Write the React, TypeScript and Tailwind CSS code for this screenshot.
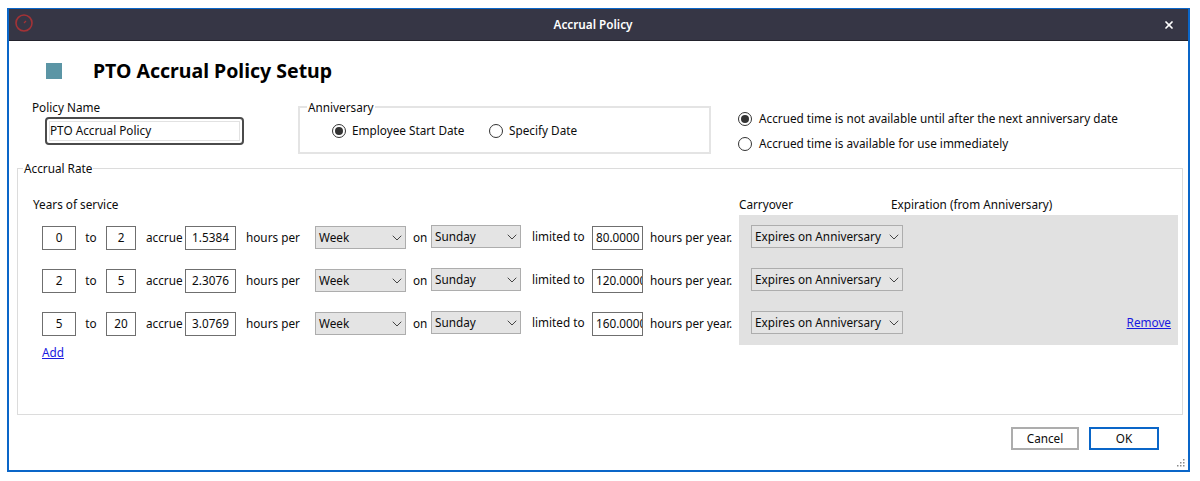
import { ChevronDown, X } from "lucide-react";

const rows = [
  { from: "0", to: "2", rate: "1.5384", limit: "80.0000" },
  { from: "2", to: "5", rate: "2.3076", limit: "120.0000" },
  { from: "5", to: "20", rate: "3.0769", limit: "160.0000" },
];

const Box = ({ value, width }: { value: string; width: string }) => (
  <div className={`${width} h-[24px] shrink-0 overflow-hidden whitespace-nowrap border border-[#6f6f6f] bg-white px-[3px] text-center leading-[21px]`}>
    {value}
  </div>
);

const Select = ({ value, width, className = "" }: { value: string; width: string; className?: string }) => (
  <div className={`${width} ${className} flex h-[23px] shrink-0 items-center justify-between border border-[#adadad] bg-[#e4e4e4] pl-[3px]`}>
    <span>{value}</span>
    <ChevronDown className="h-4 w-4 text-[#444]" strokeWidth={1.5} />
  </div>
);

const Radio = ({ checked }: { checked?: boolean }) => (
  <span className="flex h-[14px] w-[14px] shrink-0 items-center justify-center rounded-full border border-[#333] bg-white">
    {checked && <span className="h-2 w-2 rounded-full bg-[#333]" />}
  </span>
);

export default function App() {
  return (
    <div className="h-[481px] w-[1200px] overflow-hidden bg-white pl-[7px] pt-2 font-['Noto_Sans',sans-serif] text-[11.75px] text-[#0c0c0c]">
      <div className="flex h-[464px] w-[1183px] flex-col border-2 border-t border-[#0a66c8]">
        {/* Title bar */}
        <div className="flex h-[32px] shrink-0 items-center justify-between border-b border-[#22222c] bg-[#363645] pl-[6px] pr-[13px]">
          <svg className="-mt-[3px]" width="18" height="18" viewBox="0 0 18 18" fill="none">
            <circle cx="9" cy="9" r="8" stroke="#a33236" strokeWidth="1.6" />
            <path d="M9 9l2-2" stroke="#a33236" strokeWidth="1.2" />
          </svg>
          <span className="mr-[10px] font-semibold text-white">Accrual Policy</span>
          <X className="h-3 w-3 text-white" strokeWidth={3.5} />
        </div>

        <div className="relative flex min-h-0 flex-1 flex-col bg-white">
          {/* Heading */}
          <div className="flex h-[40px] items-center pl-[37px] pt-[20px]">
            <span className="h-4 w-4 bg-[#5b95a5]" />
            <h1 className="ml-[31px] text-[19.5px] font-bold leading-none text-black">PTO Accrual Policy Setup</h1>
          </div>

          <div className="mt-[18px] flex h-[61px] pl-[23px]">
            <div className="w-[266px]">
              <div className="leading-4">Policy Name</div>
              <div className="ml-[13px] mt-[2px] h-[28px] w-[199px] rounded-[4px] border-2 border-[#4b4b4b] p-[2px]">
                <div className="h-full border border-[#e2e2e2] leading-[16px]">PTO Accrual Policy</div>
              </div>
            </div>
            <fieldset className="h-[55px] w-[413px] border-2 border-[#e4e4e4] pl-[7px]">
              <legend className="px-[1px] leading-4">Anniversary</legend>
              <div className="mt-[7px] flex items-center pl-[25px]">
                <Radio checked />
                <span className="ml-[6px] w-[137px]">Employee Start Date</span>
                <Radio />
                <span className="ml-[6px]">Specify Date</span>
              </div>
            </fieldset>
            <div className="ml-[27px] flex flex-col gap-[9px] pt-[12px]">
              <div className="flex h-4 items-center gap-[7px]">
                <Radio checked />
                <span>Accrued time is not available until after the next anniversary date</span>
              </div>
              <div className="flex h-4 items-center gap-[7px]">
                <Radio />
                <span>Accrued time is available for use immediately</span>
              </div>
            </div>
          </div>

          {/* Accrual rate */}
          <fieldset className="ml-[8px] h-[255px] w-[1166px] border border-[#dcdcdc] pl-[15px]">
            <legend className="ml-[-10px] px-[1px] leading-4">Accrual Rate</legend>
            <div className="mt-[19px] flex h-[17px] items-center leading-4">
              <span className="w-[706px]">Years of service</span>
              <span className="w-[152px]">Carryover</span>
              <span>Expiration (from Anniversary)</span>
            </div>
            <div className="mt-[3px] flex">
              <div className="w-[706px] pt-[11px]">
                <div className="flex flex-col gap-[19px]">
                  {rows.map((row) => (
                    <div key={row.from} className="flex h-[24px] items-center pl-[9px]">
                      <Box value={row.from} width="w-[34px]" />
                      <span className="w-[30px] text-center">to</span>
                      <Box value={row.to} width="w-[30px]" />
                      <span className="ml-[10px] w-[39px]">accrue</span>
                      <Box value={row.rate} width="w-[51px]" />
                      <span className="ml-[10px] w-[69px]">hours per</span>
                      <Select value="Week" width="w-[91px]" className="self-start" />
                      <span className="ml-[7px] w-[18px]">on</span>
                      <Select value="Sunday" width="w-[90px]" className="-mt-px self-start" />
                      <span className="ml-[11px] w-[60px] -translate-y-px">limited to</span>
                      <Box value={row.limit} width="w-[51px]" />
                      <span className="ml-[7px] whitespace-nowrap">hours per year.</span>
                    </div>
                  ))}
                </div>
                <a className="ml-[9px] mt-[8px] block leading-4 text-[#1a1ae0] underline">Add</a>
              </div>
              <div className="h-[130px] w-[439px] bg-[#e1e1e1] pl-[12px] pt-[10px]">
                <div className="flex flex-col gap-[20px]">
                  {rows.map((row, i) => (
                    <div key={row.from} className="flex h-[23px] items-center justify-between pr-[7px]">
                      <Select value="Expires on Anniversary" width="w-[152px]" />
                      {i === 2 && <a className="text-[#1a1ae0] underline">Remove</a>}
                    </div>
                  ))}
                </div>
              </div>
            </div>
          </fieldset>

          {/* Footer */}
          <div className="mt-[12px] flex justify-end gap-[10px] pr-[29px]">
            <button className="h-[23px] w-[68px] border-2 border-[#adadad] bg-white">Cancel</button>
            <button className="h-[23px] w-[70px] border-2 border-[#0a66c8] bg-white">OK</button>
          </div>
          <svg className="absolute bottom-[2px] right-[2px]" width="10" height="10" viewBox="0 0 10 10" fill="#8a8a8a">
            <rect x="7" y="1" width="1.5" height="1.5" />
            <rect x="4" y="4" width="1.5" height="1.5" />
            <rect x="7" y="4" width="1.5" height="1.5" />
            <rect x="1" y="7" width="1.5" height="1.5" />
            <rect x="4" y="7" width="1.5" height="1.5" />
            <rect x="7" y="7" width="1.5" height="1.5" />
          </svg>
        </div>
      </div>
    </div>
  );
}
